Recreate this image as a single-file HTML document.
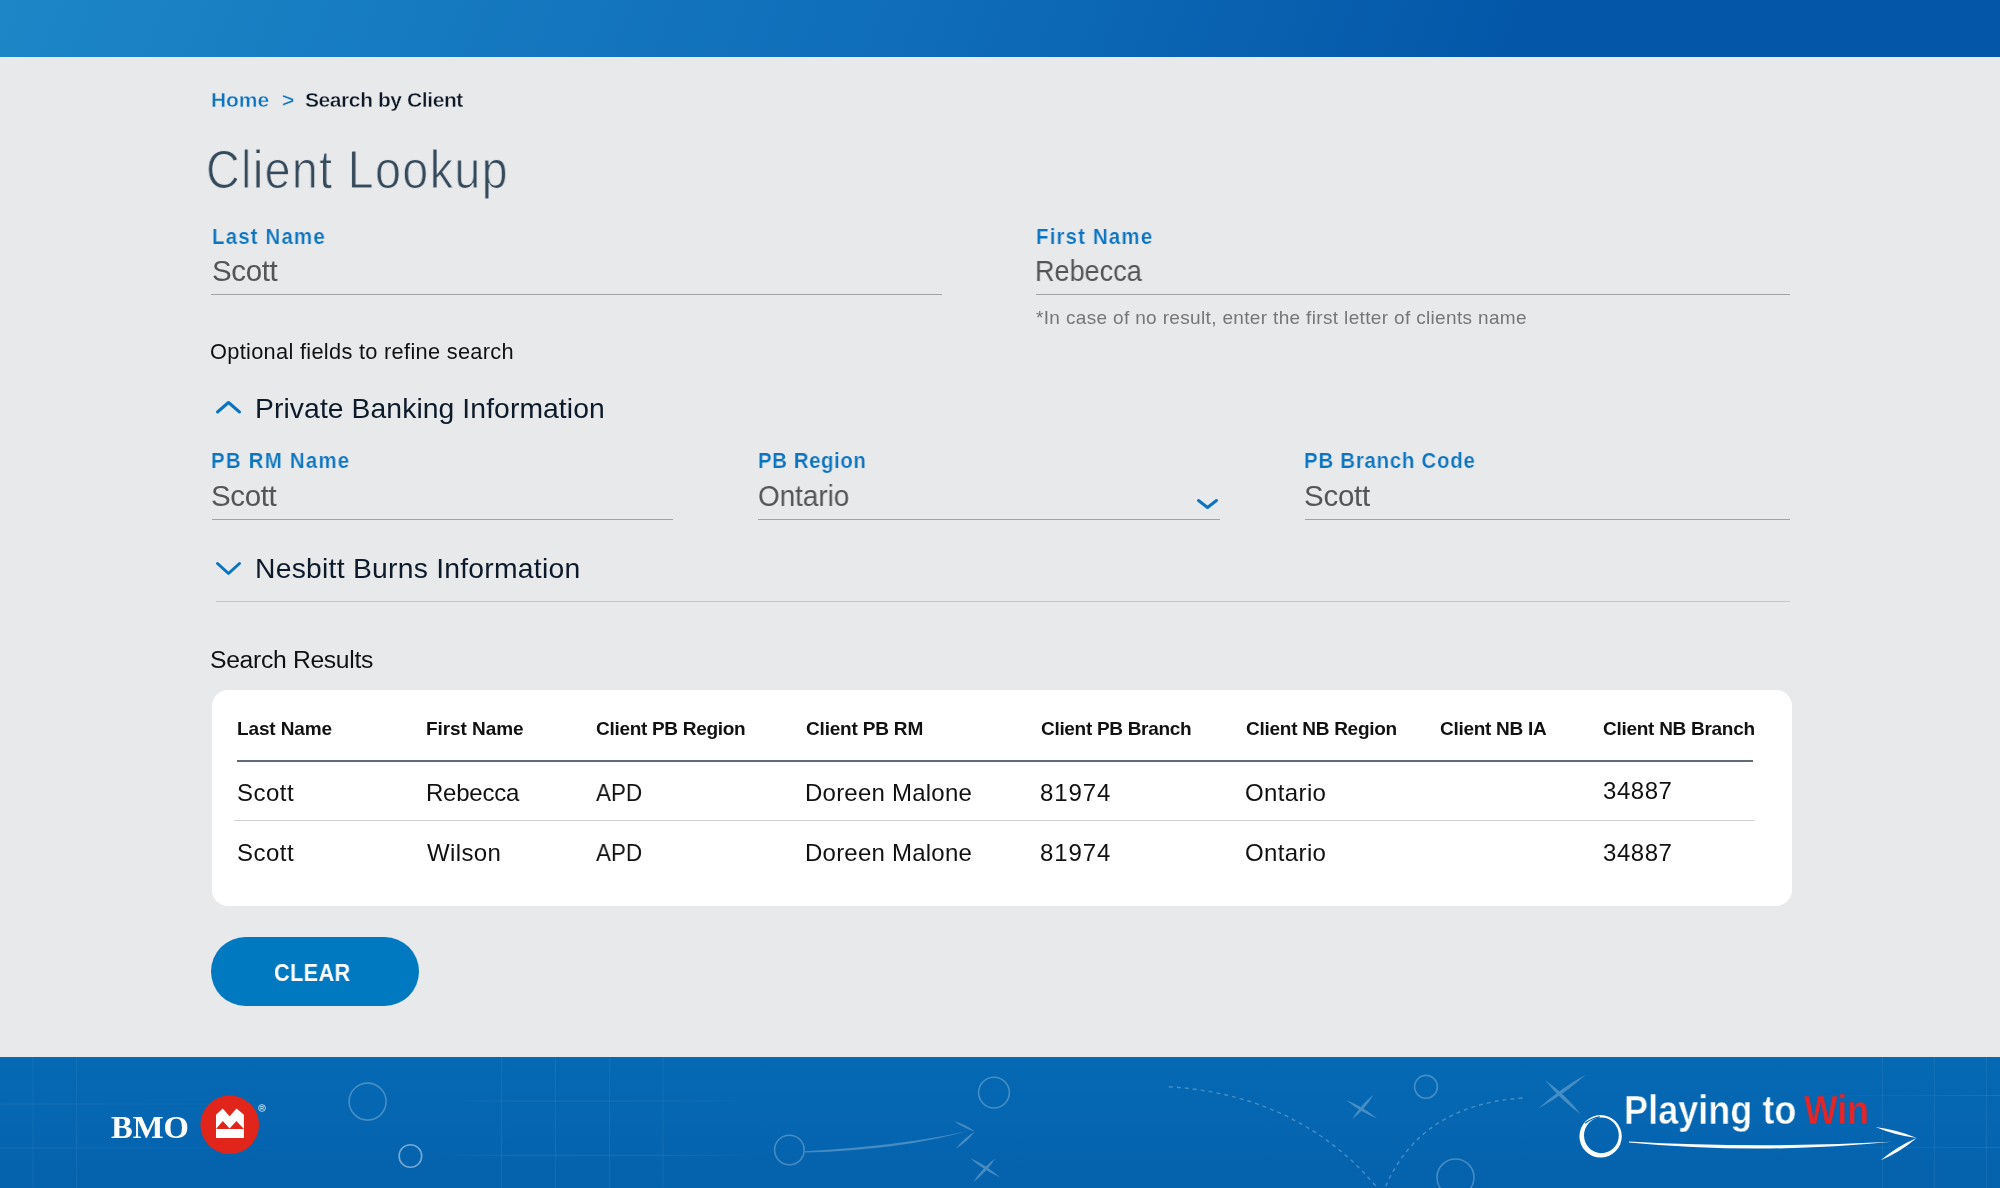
<!DOCTYPE html>
<html><head><meta charset="utf-8">
<style>
html,body{margin:0;padding:0;}
body{width:2000px;height:1188px;position:relative;overflow:hidden;background:#e8e9eb;font-family:"Liberation Sans",sans-serif;}
.t{position:absolute;white-space:nowrap;will-change:transform;}
.hdr{position:absolute;left:0;top:0;width:2000px;height:57px;background:linear-gradient(112deg,#1c86c7 0%,#0f6db9 45%,#0457a8 76%,#0457a8 100%);}
.ln{position:absolute;}
.card{position:absolute;left:212px;top:690px;width:1580px;height:216px;background:#fff;border-radius:16px;}
.btn{position:absolute;left:211px;top:937px;width:208px;height:69px;border-radius:35px;background:#0079c1;}
.ftr{position:absolute;left:0;top:1057px;width:2000px;height:131px;background:linear-gradient(180deg,#0569b4 0%,#0562ad 100%);overflow:hidden;}
</style></head><body>
<div class="hdr"></div>
<!-- underlines -->
<div class="ln" style="left:211px;top:293.5px;width:731px;height:1.5px;background:#a2a2a2"></div>
<div class="ln" style="left:1036px;top:293.5px;width:754px;height:1.5px;background:#a2a2a2"></div>
<div class="ln" style="left:211.5px;top:518.5px;width:461.5px;height:1.5px;background:#a2a2a2"></div>
<div class="ln" style="left:758px;top:518.5px;width:461.5px;height:1.5px;background:#a2a2a2"></div>
<div class="ln" style="left:1305px;top:518.5px;width:485px;height:1.5px;background:#a2a2a2"></div>
<div class="ln" style="left:216px;top:601px;width:1574px;height:1.2px;background:#c3c6ca"></div>
<!-- chevrons -->
<svg class="ln" style="left:0;top:0" width="2000" height="700">
<polyline points="217.5,412 228.5,402.5 239.5,412" fill="none" stroke="#0a74c0" stroke-width="3" stroke-linecap="round" stroke-linejoin="round"/>
<polyline points="217.5,563.5 228.5,573.5 239.5,563.5" fill="none" stroke="#0a74c0" stroke-width="3" stroke-linecap="round" stroke-linejoin="round"/>
<polyline points="1198.5,500.5 1207.5,507.5 1216.5,500.5" fill="none" stroke="#0a74c0" stroke-width="3" stroke-linecap="round" stroke-linejoin="round"/>
</svg>
<div class="card"></div>
<div class="ln" style="left:237px;top:760px;width:1516px;height:2px;background:#646b78"></div>
<div class="ln" style="left:234px;top:820px;width:1519.5px;height:1.2px;background:#cfd0d2"></div>
<div class="btn"></div>
<div class="ftr">
<svg width="2000" height="131" viewBox="0 1057 2000 131" style="position:absolute;left:0;top:0">
<defs>
<linearGradient id="gh1" x1="0" x2="1" y1="0" y2="0"><stop offset="0" stop-color="#fff" stop-opacity="0.07"/><stop offset="1" stop-color="#fff" stop-opacity="0"/></linearGradient>
<linearGradient id="gh2" x1="0" x2="1" y1="0" y2="0"><stop offset="0" stop-color="#fff" stop-opacity="0"/><stop offset="0.25" stop-color="#fff" stop-opacity="0.08"/><stop offset="0.7" stop-color="#fff" stop-opacity="0.07"/><stop offset="1" stop-color="#fff" stop-opacity="0"/></linearGradient>
<linearGradient id="gh3" x1="0" x2="1" y1="0" y2="0"><stop offset="0" stop-color="#fff" stop-opacity="0"/><stop offset="1" stop-color="#fff" stop-opacity="0.08"/></linearGradient>
</defs>
<g stroke="rgba(255,255,255,0.06)" stroke-width="1" fill="none">
<line x1="33" y1="1057" x2="33" y2="1188"/>
<line x1="76.5" y1="1057" x2="76.5" y2="1188"/>
<line x1="501.5" y1="1057" x2="501.5" y2="1188"/>
<line x1="555.5" y1="1057" x2="555.5" y2="1188"/>
<line x1="609.5" y1="1057" x2="609.5" y2="1188"/>
<line x1="663" y1="1057" x2="663" y2="1188"/>
<line x1="1882.5" y1="1057" x2="1882.5" y2="1188"/>
<line x1="1934.5" y1="1057" x2="1934.5" y2="1188"/>
<line x1="1986.5" y1="1057" x2="1986.5" y2="1188"/>
</g>
<rect x="0" y="1103.5" width="300" height="1" fill="url(#gh1)"/><rect x="0" y="1147.5" width="300" height="1" fill="url(#gh1)"/>
<rect x="440" y="1100.5" width="320" height="1" fill="url(#gh2)"/><rect x="440" y="1154.8" width="320" height="1" fill="url(#gh2)"/>
<rect x="1800" y="1095" width="200" height="1" fill="url(#gh3)"/><rect x="1800" y="1147" width="200" height="1" fill="url(#gh3)"/>
<g opacity="0.26">
<g stroke="#ffffff" stroke-width="1.6" fill="none">
<circle cx="367.6" cy="1101.6" r="18.5"/><circle cx="789.4" cy="1150" r="14.8"/><circle cx="994" cy="1092.6" r="15.4"/><circle cx="1426" cy="1086.8" r="11.4"/><circle cx="1455.5" cy="1177.5" r="18.5"/>
</g>
</g><circle cx="410.4" cy="1156" r="11.3" stroke="rgba(255,255,255,0.45)" stroke-width="1.6" fill="none"/><g opacity="0.26">
<path d="M805,1151.2 Q900,1146 968,1131 Q900,1150 805,1152.6 Z" fill="#ffffff"/>
<path d="M954.0,1121.0 Q963.5,1128.3 975.0,1131.6 Q965.5,1124.3 954.0,1121.0 Z" fill="#ffffff"/>
<path d="M975.0,1131.6 Q963.6,1138.4 955.6,1149.0 Q967.0,1142.2 975.0,1131.6 Z" fill="#ffffff"/>
<path d="M970.0,1158.0 Q983.4,1170.2 1000.0,1177.4 Q986.6,1165.2 970.0,1158.0 Z" fill="#ffffff"/>
<path d="M995.6,1158.0 Q982.1,1168.2 973.0,1182.4 Q986.5,1172.2 995.6,1158.0 Z" fill="#ffffff"/>
<path d="M1346.0,1100.0 Q1360.2,1111.9 1377.5,1118.7 Q1363.3,1106.8 1346.0,1100.0 Z" fill="#ffffff"/>
<path d="M1373.7,1094.5 Q1360.6,1105.0 1352.0,1119.5 Q1365.1,1109.0 1373.7,1094.5 Z" fill="#ffffff"/>
<path d="M1545.0,1080.0 Q1560.5,1099.8 1581.0,1114.5 Q1565.5,1094.7 1545.0,1080.0 Z" fill="#ffffff"/>
<path d="M1586.0,1074.5 Q1559.9,1088.7 1538.0,1108.7 Q1564.1,1094.5 1586.0,1074.5 Z" fill="#ffffff"/>
<g stroke="#fff" stroke-width="1.4" fill="none" stroke-dasharray="4 4"><path d="M1168.7,1086.7 Q1300,1095 1377.5,1188"/><path d="M1522.5,1098 Q1420,1105 1385,1188"/></g></g>
<circle cx="229.7" cy="1124.7" r="29.3" fill="#e1251b"/>
<polygon fill="#ffffff" points="216,1138 216,1114.8 222.7,1108.5 229.6,1116.3 236.5,1108.5 243.9,1114.8 243.9,1138"/>
<polygon fill="#e1251b" points="216,1129 222.8,1121 229.6,1128.6 236.4,1121 243.9,1129"/>
<circle cx="262" cy="1108" r="3.4" fill="none" stroke="#ffffff" stroke-width="0.7"/><text x="262" y="1110.2" font-family="Liberation Sans" font-size="5.5" fill="#fff" text-anchor="middle">R</text>
<path fill-rule="evenodd" fill="#ffffff" d="M1579.4,1136.3 a21.2,21.2 0 1,0 42.4,0 a21.2,21.2 0 1,0 -42.4,0 Z M1584,1135.35 a17.4,17.85 0 1,0 34.8,0 a17.4,17.85 0 1,0 -34.8,0 Z"/>
<path d="M1585.5,1123 Q1591,1118.6 1599.5,1116.9" fill="none" stroke="#0567b2" stroke-width="1.1" stroke-linecap="round"/>
<path d="M1629,1141.6 Q1760,1149 1891.7,1141.8 Q1760,1155 1629,1142.4 Z" fill="#ffffff"/>
<path d="M1875.5,1127.0 Q1895.3,1135.4 1916.7,1138.0 Q1896.9,1129.6 1875.5,1127.0 Z" fill="#ffffff"/>
<path d="M1916.7,1138.0 Q1897.0,1146.4 1880.7,1160.3 Q1900.4,1151.9 1916.7,1138.0 Z" fill="#ffffff"/>
</svg>
</div>
<div class="t" id="bc_home" style="left:211.00px;top:89.22px;font-size:21px;line-height:21px;font-weight:bold;color:#0a74c0;letter-spacing:-0.089px;font-family:'Liberation Sans',sans-serif;-webkit-text-stroke:0.38px #e8e9eb">Home</div>
<div class="t" id="bc_gt" style="left:281.70px;top:89.22px;font-size:21px;line-height:21px;font-weight:bold;color:#0a74c0;letter-spacing:0.000px;font-family:'Liberation Sans',sans-serif;-webkit-text-stroke:0.38px #e8e9eb">&gt;</div>
<div class="t" id="bc_cur" style="left:304.70px;top:89.22px;font-size:21px;line-height:21px;font-weight:bold;color:#0d1726;letter-spacing:-0.417px;font-family:'Liberation Sans',sans-serif;-webkit-text-stroke:0.38px #e8e9eb">Search by Client</div>
<div class="t" id="title" style="left:206.24px;top:143.12px;font-size:53px;line-height:53px;font-weight:normal;color:#34495a;letter-spacing:1.548px;font-family:'Liberation Sans',sans-serif;transform:scaleX(0.8800);transform-origin:0 0;-webkit-text-stroke:1.0px #e8e9eb">Client Lookup</div>
<div class="t" id="l_last" style="left:211.57px;top:226.17px;font-size:22px;line-height:22px;font-weight:bold;color:#0a74c0;letter-spacing:1.233px;font-family:'Liberation Sans',sans-serif;transform:scaleX(0.9300);transform-origin:0 0;-webkit-text-stroke:0.2px #e8e9eb">Last Name</div>
<div class="t" id="v_last" style="left:211.50px;top:256.02px;font-size:29.5px;line-height:29.5px;font-weight:normal;color:#555555;letter-spacing:-0.382px;font-family:'Liberation Sans',sans-serif;">Scott</div>
<div class="t" id="l_first" style="left:1035.57px;top:226.17px;font-size:22px;line-height:22px;font-weight:bold;color:#0a74c0;letter-spacing:1.243px;font-family:'Liberation Sans',sans-serif;transform:scaleX(0.9300);transform-origin:0 0;-webkit-text-stroke:0.2px #e8e9eb">First Name</div>
<div class="t" id="v_first" style="left:1035.17px;top:256.02px;font-size:29.5px;line-height:29.5px;font-weight:normal;color:#555555;letter-spacing:0.000px;font-family:'Liberation Sans',sans-serif;transform:scaleX(0.9172);transform-origin:0 0;">Rebecca</div>
<div class="t" id="hint" style="left:1036.00px;top:307.91px;font-size:19px;line-height:19px;font-weight:normal;color:#767676;letter-spacing:0.344px;font-family:'Liberation Sans',sans-serif;">*In case of no result, enter the first letter of clients name</div>
<div class="t" id="optional" style="left:210.00px;top:340.54px;font-size:21.8px;line-height:21.8px;font-weight:normal;color:#111111;letter-spacing:0.297px;font-family:'Liberation Sans',sans-serif;">Optional fields to refine search</div>
<div class="t" id="sec_pb" style="left:255.00px;top:394.04px;font-size:28.3px;line-height:28.3px;font-weight:normal;color:#0c1a2a;letter-spacing:0.082px;font-family:'Liberation Sans',sans-serif;">Private Banking Information</div>
<div class="t" id="l_pbrm" style="left:211.07px;top:450.17px;font-size:22px;line-height:22px;font-weight:bold;color:#0a74c0;letter-spacing:1.292px;font-family:'Liberation Sans',sans-serif;transform:scaleX(0.9300);transform-origin:0 0;-webkit-text-stroke:0.2px #e8e9eb">PB RM Name</div>
<div class="t" id="v_pbrm" style="left:211.00px;top:481.02px;font-size:29.5px;line-height:29.5px;font-weight:normal;color:#555555;letter-spacing:-0.357px;font-family:'Liberation Sans',sans-serif;">Scott</div>
<div class="t" id="l_pbreg" style="left:758.07px;top:450.17px;font-size:22px;line-height:22px;font-weight:bold;color:#0a74c0;letter-spacing:0.591px;font-family:'Liberation Sans',sans-serif;transform:scaleX(0.9300);transform-origin:0 0;-webkit-text-stroke:0.2px #e8e9eb">PB Region</div>
<div class="t" id="v_pbreg" style="left:758.06px;top:481.02px;font-size:29.5px;line-height:29.5px;font-weight:normal;color:#555555;letter-spacing:0.000px;font-family:'Liberation Sans',sans-serif;transform:scaleX(0.9441);transform-origin:0 0;">Ontario</div>
<div class="t" id="l_pbbc" style="left:1304.07px;top:450.17px;font-size:22px;line-height:22px;font-weight:bold;color:#0a74c0;letter-spacing:0.779px;font-family:'Liberation Sans',sans-serif;transform:scaleX(0.9300);transform-origin:0 0;-webkit-text-stroke:0.2px #e8e9eb">PB Branch Code</div>
<div class="t" id="v_pbbc" style="left:1304.00px;top:481.02px;font-size:29.5px;line-height:29.5px;font-weight:normal;color:#555555;letter-spacing:-0.257px;font-family:'Liberation Sans',sans-serif;">Scott</div>
<div class="t" id="sec_nb" style="left:255.00px;top:554.04px;font-size:28.3px;line-height:28.3px;font-weight:normal;color:#0c1a2a;letter-spacing:0.245px;font-family:'Liberation Sans',sans-serif;">Nesbitt Burns Information</div>
<div class="t" id="results" style="left:210.00px;top:647.59px;font-size:24.7px;line-height:24.7px;font-weight:normal;color:#111111;letter-spacing:-0.312px;font-family:'Liberation Sans',sans-serif;">Search Results</div>
<div class="t" id="h1" style="left:236.50px;top:718.91px;font-size:19px;line-height:19px;font-weight:bold;color:#111111;letter-spacing:-0.128px;font-family:'Liberation Sans',sans-serif;">Last Name</div>
<div class="t" id="h2" style="left:426.00px;top:718.91px;font-size:19px;line-height:19px;font-weight:bold;color:#111111;letter-spacing:-0.070px;font-family:'Liberation Sans',sans-serif;">First Name</div>
<div class="t" id="h3" style="left:596.00px;top:718.91px;font-size:19px;line-height:19px;font-weight:bold;color:#111111;letter-spacing:-0.301px;font-family:'Liberation Sans',sans-serif;">Client PB Region</div>
<div class="t" id="h4" style="left:805.60px;top:718.91px;font-size:19px;line-height:19px;font-weight:bold;color:#111111;letter-spacing:-0.187px;font-family:'Liberation Sans',sans-serif;">Client PB RM</div>
<div class="t" id="h5" style="left:1041.00px;top:718.91px;font-size:19px;line-height:19px;font-weight:bold;color:#111111;letter-spacing:-0.306px;font-family:'Liberation Sans',sans-serif;">Client PB Branch</div>
<div class="t" id="h6" style="left:1246.40px;top:718.91px;font-size:19px;line-height:19px;font-weight:bold;color:#111111;letter-spacing:-0.264px;font-family:'Liberation Sans',sans-serif;">Client NB Region</div>
<div class="t" id="h7" style="left:1440.00px;top:718.91px;font-size:19px;line-height:19px;font-weight:bold;color:#111111;letter-spacing:-0.278px;font-family:'Liberation Sans',sans-serif;">Client NB IA</div>
<div class="t" id="h8" style="left:1603.00px;top:718.91px;font-size:19px;line-height:19px;font-weight:bold;color:#111111;letter-spacing:-0.276px;font-family:'Liberation Sans',sans-serif;">Client NB Branch</div>
<div class="t" id="r1c1" style="left:237.00px;top:781.18px;font-size:24px;line-height:24px;font-weight:normal;color:#111111;letter-spacing:0.494px;font-family:'Liberation Sans',sans-serif;">Scott</div>
<div class="t" id="r1c2" style="left:426.00px;top:781.18px;font-size:24px;line-height:24px;font-weight:normal;color:#111111;letter-spacing:-0.229px;font-family:'Liberation Sans',sans-serif;">Rebecca</div>
<div class="t" id="r1c3" style="left:596.00px;top:781.18px;font-size:24px;line-height:24px;font-weight:normal;color:#111111;letter-spacing:0.000px;font-family:'Liberation Sans',sans-serif;transform:scaleX(0.9344);transform-origin:0 0;">APD</div>
<div class="t" id="r1c4" style="left:805.00px;top:781.18px;font-size:24px;line-height:24px;font-weight:normal;color:#111111;letter-spacing:0.229px;font-family:'Liberation Sans',sans-serif;">Doreen Malone</div>
<div class="t" id="r1c5" style="left:1040.00px;top:781.18px;font-size:24px;line-height:24px;font-weight:normal;color:#111111;letter-spacing:0.902px;font-family:'Liberation Sans',sans-serif;">81974</div>
<div class="t" id="r1c6" style="left:1245.40px;top:781.18px;font-size:24px;line-height:24px;font-weight:normal;color:#111111;letter-spacing:0.374px;font-family:'Liberation Sans',sans-serif;">Ontario</div>
<div class="t" id="r1c8" style="left:1603.00px;top:779.38px;font-size:24px;line-height:24px;font-weight:normal;color:#111111;letter-spacing:0.552px;font-family:'Liberation Sans',sans-serif;">34887</div>
<div class="t" id="r2c1" style="left:237.00px;top:841.48px;font-size:24px;line-height:24px;font-weight:normal;color:#111111;letter-spacing:0.494px;font-family:'Liberation Sans',sans-serif;">Scott</div>
<div class="t" id="r2c2" style="left:427.00px;top:841.48px;font-size:24px;line-height:24px;font-weight:normal;color:#111111;letter-spacing:0.387px;font-family:'Liberation Sans',sans-serif;">Wilson</div>
<div class="t" id="r2c3" style="left:596.00px;top:841.48px;font-size:24px;line-height:24px;font-weight:normal;color:#111111;letter-spacing:0.000px;font-family:'Liberation Sans',sans-serif;transform:scaleX(0.9344);transform-origin:0 0;">APD</div>
<div class="t" id="r2c4" style="left:805.00px;top:841.48px;font-size:24px;line-height:24px;font-weight:normal;color:#111111;letter-spacing:0.229px;font-family:'Liberation Sans',sans-serif;">Doreen Malone</div>
<div class="t" id="r2c5" style="left:1040.00px;top:841.48px;font-size:24px;line-height:24px;font-weight:normal;color:#111111;letter-spacing:0.902px;font-family:'Liberation Sans',sans-serif;">81974</div>
<div class="t" id="r2c6" style="left:1245.40px;top:841.48px;font-size:24px;line-height:24px;font-weight:normal;color:#111111;letter-spacing:0.374px;font-family:'Liberation Sans',sans-serif;">Ontario</div>
<div class="t" id="r2c8" style="left:1603.00px;top:841.48px;font-size:24px;line-height:24px;font-weight:normal;color:#111111;letter-spacing:0.552px;font-family:'Liberation Sans',sans-serif;">34887</div>
<div class="t" id="clear" style="left:273.80px;top:962.10px;font-size:23.5px;line-height:23.5px;font-weight:bold;color:#ffffff;letter-spacing:0.464px;font-family:'Liberation Sans',sans-serif;transform:scaleX(0.9200);transform-origin:0 0;">CLEAR</div>
<div class="t" id="bmo" style="left:111.20px;top:1111.11px;font-size:32px;line-height:32px;font-weight:bold;color:#ffffff;letter-spacing:0.000px;font-family:'Liberation Serif',sans-serif;transform:scaleX(1.0192);transform-origin:0 0;">BMO</div>
<div class="t" id="ptw" style="left:1623.81px;top:1090.19px;font-size:40.4px;line-height:40.4px;font-weight:bold;color:#ffffff;letter-spacing:0.000px;font-family:'Liberation Sans',sans-serif;transform:scaleX(0.8932);transform-origin:0 0;-webkit-text-stroke:0.5px #0567b2">Playing to</div>
<div class="t" id="win" style="left:1803.60px;top:1089.99px;font-size:40.4px;line-height:40.4px;font-weight:bold;color:#ea2323;letter-spacing:0.000px;font-family:'Liberation Sans',sans-serif;transform:scaleX(0.8807);transform-origin:0 0;-webkit-text-stroke:0.5px #0567b2">Win</div>
</body></html>
